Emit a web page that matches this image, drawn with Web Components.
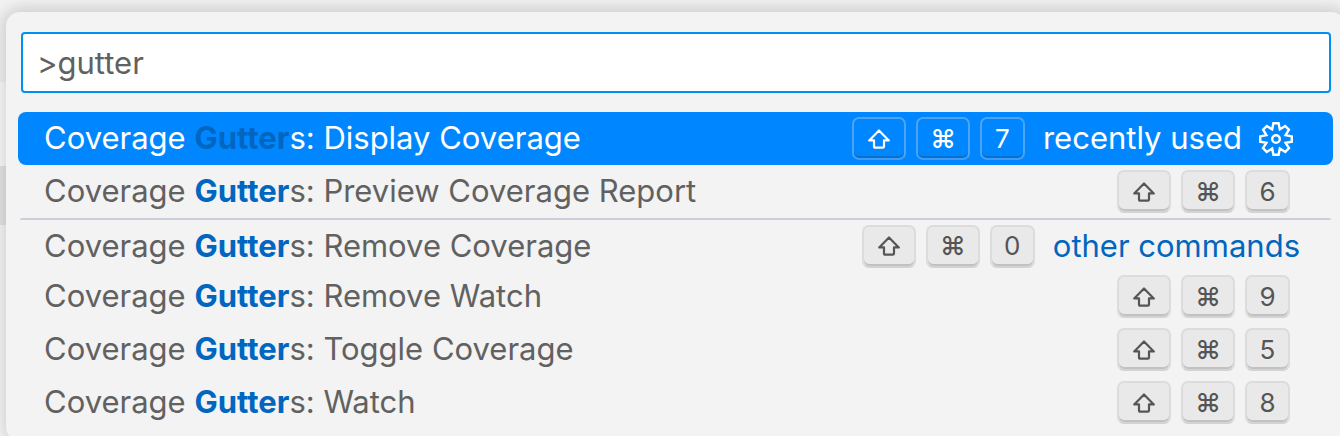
<!DOCTYPE html>
<html lang="en">
<head>
<meta charset="utf-8">
<title>Command Palette</title>
<style>
  html { height: 100%; overflow: hidden; }
  body {
    margin: 0; height: 100%; overflow: hidden;
    font-family: Inter, "Liberation Sans", sans-serif;
    background: linear-gradient(#f3f3f3 82px, #fcfcfc 82px, #fcfcfc 166px, #e6e6e6 166px, #e6e6e6 225px, #f8f8f8 225px);
  }
</style>
</head>
<body>
<quick-input value=">gutter">
  <command-row selected keys="⇧ ⌘ 7" note="recently used">Display Coverage</command-row>
  <command-row keys="⇧ ⌘ 6">Preview Coverage Report</command-row>
  <command-row group keys="⇧ ⌘ 0" note="other commands">Remove Coverage</command-row>
  <command-row keys="⇧ ⌘ 9">Remove Watch</command-row>
  <command-row keys="⇧ ⌘ 5">Toggle Coverage</command-row>
  <command-row keys="⇧ ⌘ 8">Watch</command-row>
</quick-input>

<script>
class KeyCap extends HTMLElement {
  connectedCallback() {
    this.attachShadow({ mode: 'open' }).innerHTML = `
      <style>
        :host { display: block; }
        kbd {
          display: flex; align-items: center; justify-content: center;
          box-sizing: border-box; height: 43px; min-width: 45px; padding: 0 12px;
          border: 2px solid var(--key-border, #dcdcdc); border-bottom-color: var(--key-bottom, #d3d3d3);
          border-radius: 7px; background: var(--key-bg, #e9e9e9); color: var(--key-ink, #555);
          box-shadow: inset 0 -2px 0 var(--key-shade, #c2c2c2);
          font: 26px/36px Inter, "DejaVu Sans", sans-serif;
        }
        :host([key="⌘"]) kbd { font-weight: 500; }
        svg {
          display: block; width: 22px; height: 20px; margin: 0 2px; fill: none;
          stroke: currentColor; stroke-width: 2.2; stroke-linejoin: round;
        }
      </style>
      <kbd>${this.getAttribute('key') === '⇧'
        ? `<svg viewBox="0 0 22 20" role="img" aria-label="Shift"><path d="M11 1.5 20.8 11.4H16V17.4q0 1.3-1.3 1.3H7.3Q6 18.7 6 17.4V11.4H1.2z"/></svg>`
        : this.getAttribute('key')}</kbd>`;
  }
}
customElements.define('key-cap', KeyCap);

class CommandRow extends HTMLElement {
  connectedCallback() {
    const keys = this.getAttribute('keys').split(' ');
    const note = this.getAttribute('note');
    const selected = this.hasAttribute('selected');
    this.setAttribute('role', 'option');
    this.setAttribute('aria-selected', selected);
    this.attachShadow({ mode: 'open' }).innerHTML = `
      <style>
        :host {
          display: flex; align-items: center; box-sizing: border-box; height: 53px;
          padding: 0 33px 0 26px; border-radius: 8px; color: #616161;
          font-size: 31px; line-height: 36px; white-space: nowrap;
          font-variant-ligatures: none;
        }
        :host([group]) { height: 52px; position: relative; padding-top: 4px; }
        :host([group])::before {
          content: ""; position: absolute; top: 0; left: 2px; right: 2px;
          height: 2px; background: #cccedb; border-radius: 2px 2px 0 0;
        }
        :host([selected]) {
          background: #0087ff; color: #fff;
          --key-bg: transparent; --key-border: #4ba4f4; --key-bottom: #3f9cf0;
          --key-ink: #fff; --key-shade: #0572d3;
        }
        .label, .note { padding-bottom: 2px; }
        :host([group]) .label, :host([group]) .note { padding-bottom: 0; }
        .label { flex: 1; min-width: 0; }
        b { color: #0066bf; font-weight: 700; }
        .keys { display: flex; gap: 10px; margin-right: 10px; }
        .note { color: #0066bf; margin-left: 8px; }
        :host([selected]) .note { color: inherit; }
        button {
          display: flex; width: 36px; height: 36px; padding: 0; border: 0;
          margin: 0 6px 0 16px; background: none; color: inherit;
        }
        svg { width: 36px; height: 36px; }
      </style>
      <span class="label">Coverage <b>Gutter</b>s: <slot></slot></span>
      <span class="keys">${keys.map(k => `<key-cap key="${k}"></key-cap>`).join('')}</span>
      ${note ? `<span class="note">${note}</span>` : ''}
      ${selected ? `<button aria-label="Configure keybinding">
        <svg viewBox="0 0 36 36" fill="none" stroke="currentColor" stroke-width="2.4">
          <path d="M15.4 2.2h5.2l1.2 6.2 5.4-3.4 3.7 3.7-3.3 5.5 6.2 1.2v5.3l-6.2 1.2 3.4 5.3-3.7 3.7-5.5-3.4-1.2 6.3h-5.2l-1.2-6.3-5.5 3.4-3.7-3.7 3.4-5.3-6.2-1.2v-5.3l6.2-1.2-3.3-5.5 3.7-3.7 5.4 3.4z"/>
          <circle cx="18" cy="18" r="3.8"/>
        </svg></button>` : ''}`;
  }
}
customElements.define('command-row', CommandRow);

class QuickInput extends HTMLElement {
  connectedCallback() {
    this.attachShadow({ mode: 'open' }).innerHTML = `
      <style>
        :host {
          display: block; margin: 12px -5px 0 6px; padding: 20px 12px 12px;
          border-radius: 14px; background: #f3f3f3;
          box-shadow: 0 0 16px 4px rgba(0, 0, 0, .16);
        }
        .field { display: flex; margin: 0 2px 19px 3px; }
        input {
          box-sizing: border-box; flex: 1; min-width: 0; height: 61px; padding: 0 14px;
          border: 2px solid #0090f1; border-radius: 4px; outline: 0;
          background: #fff; color: #616161; font: 31px/36px Inter, "Liberation Sans", sans-serif;
          font-variant-ligatures: none;
        }
      </style>
      <div class="field"><input type="text" aria-label="Command"></div>
      <div role="listbox" aria-label="Commands"><slot></slot></div>`;
    this.shadowRoot.querySelector('input').value = this.getAttribute('value');
  }
}
customElements.define('quick-input', QuickInput);
</script>
</body>
</html>
